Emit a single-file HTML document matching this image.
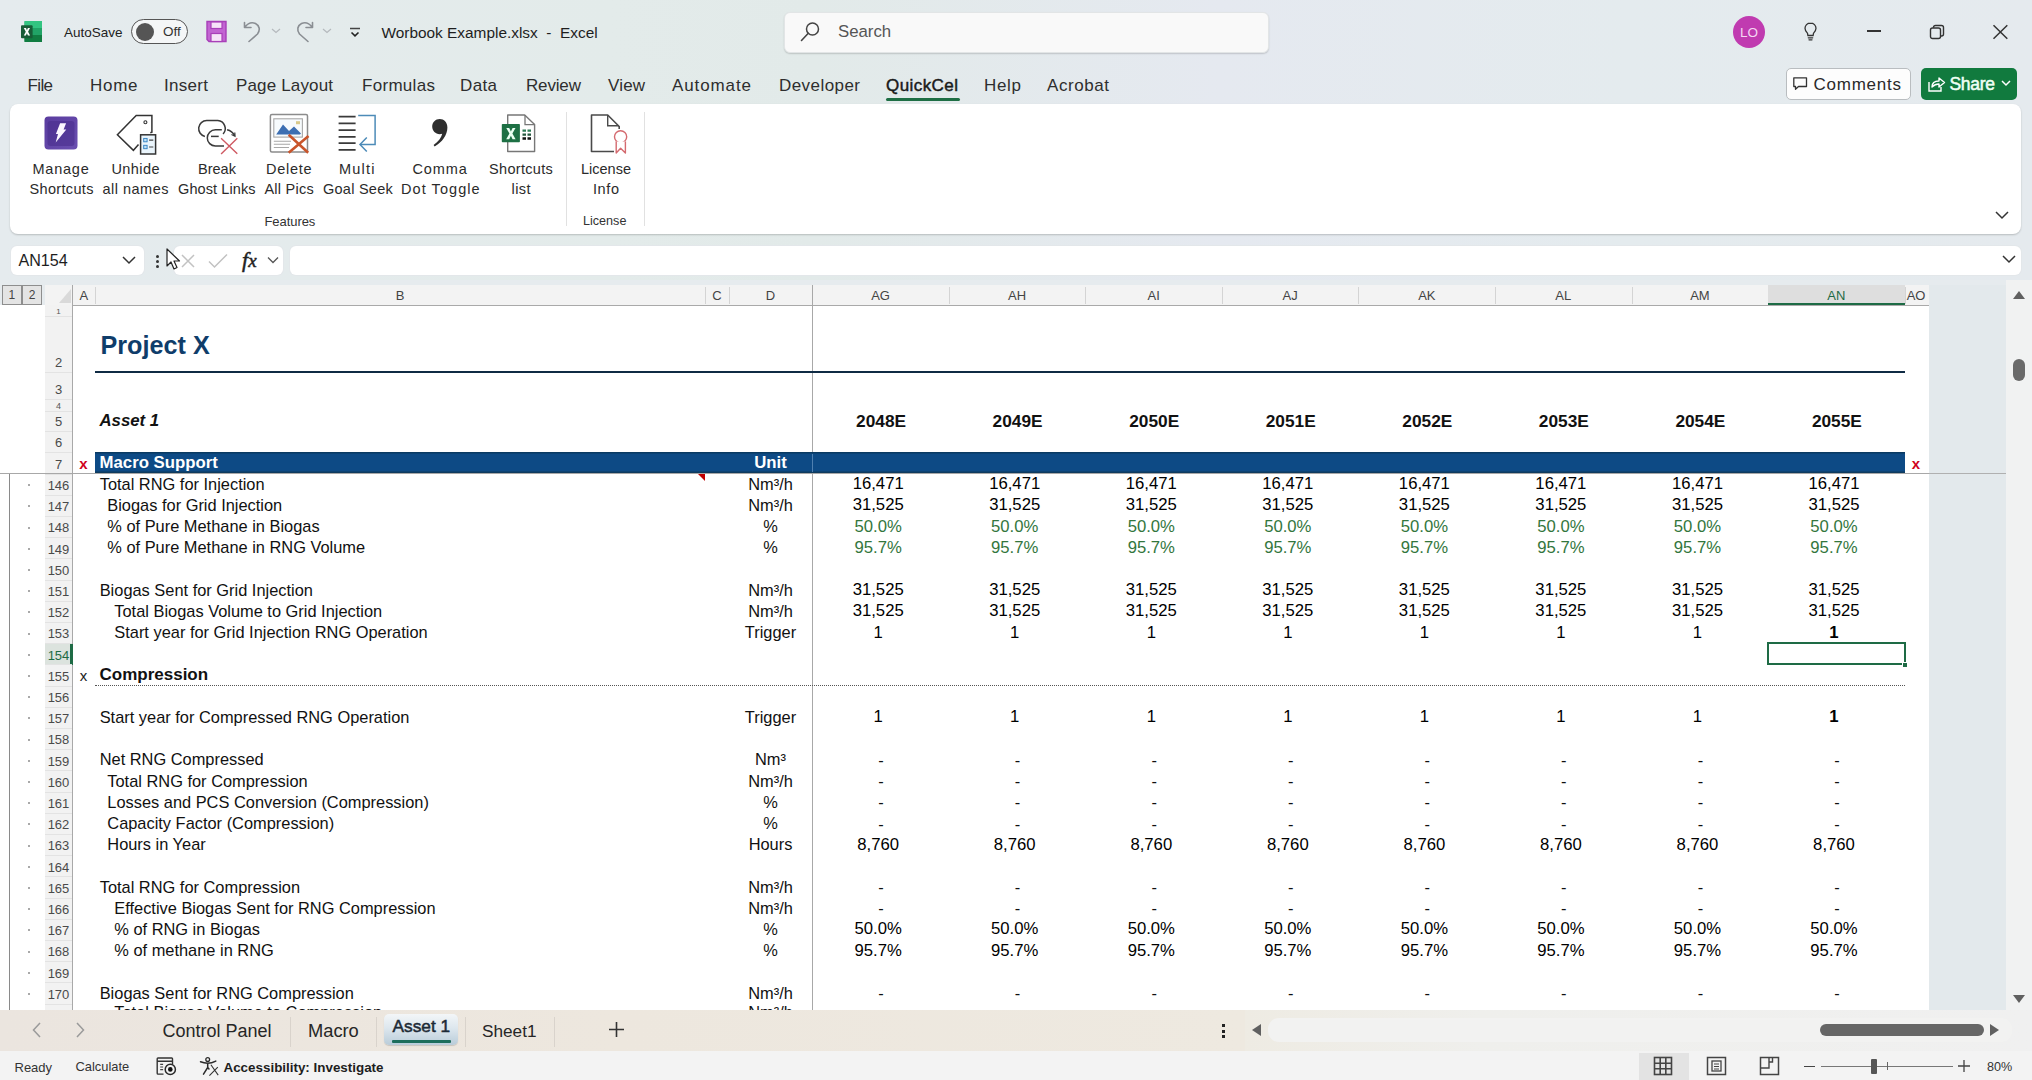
<!DOCTYPE html>
<html><head><meta charset="utf-8"><style>
html,body{margin:0;padding:0;}
body{width:2032px;height:1080px;overflow:hidden;position:relative;background:#e6ebee;font-family:"Liberation Sans", sans-serif;}
.t{position:absolute;white-space:nowrap;font-family:"Liberation Sans", sans-serif;}
.r{position:absolute;}
svg.r{overflow:visible;}
</style></head><body>
<div class="r" style="left:0;top:0;width:2032px;height:280px;background:linear-gradient(90deg,#e5ebee 0%,#e3ebea 30%,#e2eae9 40%,#e5e9f0 60%,#e4ebee 80%,#e5eaee 100%);"></div>
<svg class="r" style="left:20px;top:20px" width="24" height="24" viewBox="0 0 24 24">
<rect x="4.5" y="1" width="17.5" height="21" rx="1" fill="#21a366"/>
<rect x="4.5" y="1" width="17.5" height="7" fill="#33c481"/>
<rect x="4.5" y="15" width="17.5" height="7" fill="#107c41"/>
<rect x="1" y="5.3" width="11.6" height="13" rx="1" fill="#185c37"/>
<path d="M3.8 8 L6 8 L6.9 10.3 L7.9 8 L10 8 L8.1 11.7 L10.1 15.6 L7.9 15.6 L6.9 13.2 L5.9 15.6 L3.8 15.6 L5.8 11.7 Z" fill="#fff"/>
</svg><div class="t" style="left:64.0px;top:25.6px;font-size:13.5px;line-height:13.5px;color:#222;font-weight:normal;font-style:normal;">AutoSave</div><div class="r" style="left:131px;top:18.5px;width:57px;height:25px;border:1.5px solid #555;border-radius:13px;box-sizing:border-box;background:#f4f6f7;"></div><div class="r" style="left:136px;top:22.5px;width:18px;height:18px;background:#555;border-radius:50%;"></div><div class="t" style="left:163.0px;top:25.4px;font-size:13.5px;line-height:13.5px;color:#333;font-weight:normal;font-style:normal;">Off</div><svg class="r" style="left:205px;top:20px" width="23" height="23" viewBox="0 0 23 23">
<path d="M2 1.5 H21 V21.5 H4 L2 19.5 Z" fill="#c264d2" stroke="#a83fb8" stroke-width="1.4"/>
<rect x="6" y="2" width="11" height="6.5" fill="#f6e3f8" stroke="#a83fb8" stroke-width="1.2"/>
<rect x="6" y="13.5" width="11" height="8" fill="#f6e3f8" stroke="#a83fb8" stroke-width="1.2"/>
</svg><svg class="r" style="left:242px;top:19px" width="22" height="25" viewBox="0 0 22 25"><path d="M2.5 3.5 V8.5 H9 M2.8 8.3 C6 4 10 3 13.5 4.5 C17.5 6.5 18.5 11 15.5 15 L7 22.5" fill="none" stroke="#8a8e93" stroke-width="1.6" stroke-linecap="round" stroke-linejoin="round"/></svg><svg class="r" style="left:270px;top:27px" width="12" height="8" viewBox="0 0 12 8"><path d="M2 2 L6 5.5 L10 2" fill="none" stroke="#b5b9bd" stroke-width="1.2"/></svg><svg class="r" style="left:293px;top:19px" width="22" height="25" viewBox="0 0 22 25"><path d="M19.5 3.5 V8.5 H13 M19.2 8.3 C16 4 12 3 8.5 4.5 C4.5 6.5 3.5 11 6.5 15 L15 22.5" fill="none" stroke="#8a8e93" stroke-width="1.6" stroke-linecap="round" stroke-linejoin="round"/></svg><svg class="r" style="left:321px;top:27px" width="12" height="8" viewBox="0 0 12 8"><path d="M2 2 L6 5.5 L10 2" fill="none" stroke="#b5b9bd" stroke-width="1.2"/></svg><svg class="r" style="left:347px;top:25px" width="16" height="14" viewBox="0 0 16 14"><path d="M3 3.5 H13" stroke="#444" stroke-width="1.5"/><path d="M4.5 7.5 L8 10.8 L11.5 7.5" fill="none" stroke="#222" stroke-width="1.6"/></svg><div class="t" style="left:381.5px;top:24.7px;font-size:15.4px;line-height:15.4px;color:#1e1e1e;font-weight:normal;font-style:normal;">Worbook Example.xlsx&nbsp;&nbsp;-&nbsp;&nbsp;Excel</div><div class="r" style="left:784px;top:11.5px;width:485px;height:41px;background:#f9f9f9;border:1px solid #e2e5e6;border-radius:6px;box-sizing:border-box;box-shadow:0 1px 1.5px rgba(0,0,0,0.16);"></div><svg class="r" style="left:798px;top:20px" width="24" height="24" viewBox="0 0 24 24"><circle cx="14.5" cy="9" r="6" fill="none" stroke="#444" stroke-width="1.5"/><path d="M10.3 13.3 L3.5 20.5" stroke="#444" stroke-width="1.6" stroke-linecap="round"/></svg><div class="t" style="left:838.0px;top:23.8px;font-size:16.8px;line-height:16.8px;color:#555;font-weight:normal;font-style:normal;">Search</div><div class="r" style="left:1733px;top:16px;width:32px;height:32px;background:#c03bb0;border-radius:50%;"></div><div class="t" style="left:1729.0px;width:40px;text-align:center;top:26.1px;font-size:13.5px;line-height:13.5px;color:#f5d7f2;font-weight:normal;font-style:normal;">LO</div><svg class="r" style="left:1802px;top:21px" width="18" height="21" viewBox="0 0 18 21"><path d="M8.5 2 C5.2 2 3 4.5 3 7.3 C3 9.5 4.3 10.8 5.5 12.2 L5.9 14.5 H11.1 L11.5 12.2 C12.7 10.8 14 9.5 14 7.3 C14 4.5 11.8 2 8.5 2 Z" fill="none" stroke="#333" stroke-width="1.3"/><path d="M6.3 16.8 H10.7 M7 18.8 H10" stroke="#333" stroke-width="1.3" stroke-linecap="round"/></svg><div class="r" style="left:1866.5px;top:30px;width:14px;height:2px;background:#333;"></div><svg class="r" style="left:1929px;top:24px" width="17" height="16" viewBox="0 0 17 16"><rect x="1.5" y="4" width="10" height="10.5" rx="2" fill="none" stroke="#333" stroke-width="1.4"/><path d="M4.5 3.8 V3.5 C4.5 2.4 5.3 1.5 6.5 1.5 H12.5 C13.6 1.5 14.5 2.4 14.5 3.5 V10 C14.5 11.1 13.6 12 12.5 12 H11.8" fill="none" stroke="#333" stroke-width="1.4"/></svg><svg class="r" style="left:1992px;top:24px" width="17" height="16" viewBox="0 0 17 16"><path d="M1.5 1.2 L15.3 14.8 M15.3 1.2 L1.5 14.8" stroke="#333" stroke-width="1.5"/></svg><div class="t" style="left:27.5px;top:76.6px;font-size:17px;line-height:17px;color:#2e2e2e;font-weight:normal;font-style:normal;letter-spacing:-0.63px;">File</div><div class="t" style="left:90.0px;top:76.6px;font-size:17px;line-height:17px;color:#2e2e2e;font-weight:normal;font-style:normal;letter-spacing:0.70px;">Home</div><div class="t" style="left:164.0px;top:76.6px;font-size:17px;line-height:17px;color:#2e2e2e;font-weight:normal;font-style:normal;letter-spacing:0.30px;">Insert</div><div class="t" style="left:236.0px;top:76.6px;font-size:17px;line-height:17px;color:#2e2e2e;font-weight:normal;font-style:normal;letter-spacing:0.15px;">Page Layout</div><div class="t" style="left:362.0px;top:76.6px;font-size:17px;line-height:17px;color:#2e2e2e;font-weight:normal;font-style:normal;letter-spacing:0.30px;">Formulas</div><div class="t" style="left:460.0px;top:76.6px;font-size:17px;line-height:17px;color:#2e2e2e;font-weight:normal;font-style:normal;letter-spacing:0.37px;">Data</div><div class="t" style="left:526.0px;top:76.6px;font-size:17px;line-height:17px;color:#2e2e2e;font-weight:normal;font-style:normal;letter-spacing:-0.16px;">Review</div><div class="t" style="left:608.0px;top:76.6px;font-size:17px;line-height:17px;color:#2e2e2e;font-weight:normal;font-style:normal;letter-spacing:0.17px;">View</div><div class="t" style="left:672.0px;top:76.6px;font-size:17px;line-height:17px;color:#2e2e2e;font-weight:normal;font-style:normal;letter-spacing:0.89px;">Automate</div><div class="t" style="left:779.0px;top:76.6px;font-size:17px;line-height:17px;color:#2e2e2e;font-weight:normal;font-style:normal;letter-spacing:0.44px;">Developer</div><div class="t" style="left:886.0px;top:76.6px;font-size:17px;line-height:17px;color:#1a1a1a;font-weight:normal;font-style:normal;letter-spacing:0.43px;-webkit-text-stroke:0.45px #1a1a1a;">QuickCel</div><div class="t" style="left:984.0px;top:76.6px;font-size:17px;line-height:17px;color:#2e2e2e;font-weight:normal;font-style:normal;letter-spacing:0.67px;">Help</div><div class="t" style="left:1047.0px;top:76.6px;font-size:17px;line-height:17px;color:#2e2e2e;font-weight:normal;font-style:normal;letter-spacing:0.57px;">Acrobat</div><div class="r" style="left:886px;top:97.5px;width:74px;height:3px;background:#1e6e44;border-radius:2px;"></div><div class="r" style="left:1786px;top:68px;width:125px;height:32px;background:#fdfdfd;border:1px solid #b9bdc0;border-radius:5px;box-sizing:border-box;"></div><svg class="r" style="left:1792px;top:76px" width="18" height="18" viewBox="0 0 18 18"><path d="M1.8 1.8 H14.5 V10.5 H6.5 L3.5 13.3 V10.5 H1.8 Z" fill="none" stroke="#333" stroke-width="1.3" stroke-linejoin="round"/></svg><div class="t" style="left:1813.5px;top:75.6px;font-size:17px;line-height:17px;color:#2a2a2a;font-weight:normal;font-style:normal;letter-spacing:0.75px;">Comments</div><div class="r" style="left:1921px;top:68px;width:96px;height:32px;background:#117a3e;border-radius:5px;"></div><svg class="r" style="left:1926px;top:74px" width="22" height="20" viewBox="0 0 22 20"><path d="M3 8 V17 H15 V13" fill="none" stroke="#fff" stroke-width="1.4"/><path d="M6 13 C6 9 9 7 13 7 V4 L18.5 8.5 L13 13 V10 C10 10 8 11 6 13 Z" fill="none" stroke="#fff" stroke-width="1.4" stroke-linejoin="round"/></svg><div class="t" style="left:1949.5px;top:75.7px;font-size:17.5px;line-height:17.5px;color:#effff4;font-weight:normal;font-style:normal;-webkit-text-stroke:0.5px #effff4;letter-spacing:-0.3px;">Share</div><svg class="r" style="left:2000px;top:78px" width="12" height="10" viewBox="0 0 12 10"><path d="M2 3 L6 7 L10 3" fill="none" stroke="#fff" stroke-width="1.5"/></svg><div class="r" style="left:10px;top:104px;width:2011px;height:130px;background:#fff;border-radius:8px;box-shadow:0 1px 2px rgba(0,0,0,0.2);"></div><div class="t" style="left:32.5px;top:161.5px;font-size:14.5px;line-height:14.5px;color:#2b2b2b;font-weight:normal;font-style:normal;letter-spacing:0.76px;">Manage</div><div class="t" style="left:29.6px;top:182.1px;font-size:14.5px;line-height:14.5px;color:#2b2b2b;font-weight:normal;font-style:normal;letter-spacing:0.32px;">Shortcuts</div><div class="t" style="left:111.5px;top:161.5px;font-size:14.5px;line-height:14.5px;color:#2b2b2b;font-weight:normal;font-style:normal;letter-spacing:0.40px;">Unhide</div><div class="t" style="left:102.4px;top:182.1px;font-size:14.5px;line-height:14.5px;color:#2b2b2b;font-weight:normal;font-style:normal;letter-spacing:0.50px;">all names</div><div class="t" style="left:198.0px;top:161.5px;font-size:14.5px;line-height:14.5px;color:#2b2b2b;font-weight:normal;font-style:normal;letter-spacing:0.02px;">Break</div><div class="t" style="left:178.0px;top:182.1px;font-size:14.5px;line-height:14.5px;color:#2b2b2b;font-weight:normal;font-style:normal;letter-spacing:0.10px;">Ghost Links</div><div class="t" style="left:266.0px;top:161.5px;font-size:14.5px;line-height:14.5px;color:#2b2b2b;font-weight:normal;font-style:normal;letter-spacing:0.73px;">Delete</div><div class="t" style="left:264.4px;top:182.1px;font-size:14.5px;line-height:14.5px;color:#2b2b2b;font-weight:normal;font-style:normal;letter-spacing:0.27px;">All Pics</div><div class="t" style="left:339.0px;top:161.5px;font-size:14.5px;line-height:14.5px;color:#2b2b2b;font-weight:normal;font-style:normal;letter-spacing:1.24px;">Multi</div><div class="t" style="left:323.0px;top:182.1px;font-size:14.5px;line-height:14.5px;color:#2b2b2b;font-weight:normal;font-style:normal;letter-spacing:0.25px;">Goal Seek</div><div class="t" style="left:412.5px;top:161.5px;font-size:14.5px;line-height:14.5px;color:#2b2b2b;font-weight:normal;font-style:normal;letter-spacing:0.86px;">Comma</div><div class="t" style="left:401.0px;top:182.1px;font-size:14.5px;line-height:14.5px;color:#2b2b2b;font-weight:normal;font-style:normal;letter-spacing:1.06px;">Dot Toggle</div><div class="t" style="left:489.0px;top:161.5px;font-size:14.5px;line-height:14.5px;color:#2b2b2b;font-weight:normal;font-style:normal;letter-spacing:0.32px;">Shortcuts</div><div class="t" style="left:511.5px;top:182.1px;font-size:14.5px;line-height:14.5px;color:#2b2b2b;font-weight:normal;font-style:normal;letter-spacing:0.43px;">list</div><div class="t" style="left:581.0px;top:161.5px;font-size:14.5px;line-height:14.5px;color:#2b2b2b;font-weight:normal;font-style:normal;letter-spacing:-0.00px;">License</div><div class="t" style="left:593.0px;top:182.1px;font-size:14.5px;line-height:14.5px;color:#2b2b2b;font-weight:normal;font-style:normal;letter-spacing:0.59px;">Info</div><div class="t" style="left:264.4px;top:215.0px;font-size:13px;line-height:13px;color:#333;font-weight:normal;font-style:normal;letter-spacing:-0.05px;">Features</div><div class="t" style="left:583.0px;top:215.3px;font-size:12.6px;line-height:12.6px;color:#333;font-weight:normal;font-style:normal;">License</div><div class="r" style="left:566px;top:112px;width:1px;height:114px;background:#e1e1e1;"></div><div class="r" style="left:644px;top:112px;width:1px;height:114px;background:#e1e1e1;"></div><svg class="r" style="left:1994px;top:208px" width="16" height="14" viewBox="0 0 16 14"><path d="M2 4 L8 10 L14 4" fill="none" stroke="#333" stroke-width="1.5"/></svg><svg class="r" style="left:44px;top:116px" width="34" height="34" viewBox="0 0 34 34">
<defs><linearGradient id="gp" x1="0" y1="0" x2="1" y2="1"><stop offset="0" stop-color="#5a3c9f"/><stop offset="1" stop-color="#6a4fb0"/></linearGradient></defs>
<rect x="0.5" y="0.5" width="33" height="33" rx="4" fill="url(#gp)"/>
<rect x="3.5" y="5" width="27" height="25" rx="3" fill="#472b8a" opacity="0.55"/><path d="M16.1 7.2 H22.1 L19.6 13.6 H22.3 L11.7 26.4 L14 17.9 H11.9 Z" fill="#fbf6ff"/>
</svg><svg class="r" style="left:115px;top:114px" width="44" height="42" viewBox="0 0 44 42">
<path d="M35.3 18.7 L36.9 18.2 V1.6 H21.2 L2.4 20.8 L18.4 36.3 L23.5 30.5" fill="none" stroke="#333" stroke-width="1.5" stroke-linejoin="miter"/>
<circle cx="30.4" cy="8.3" r="1.5" fill="none" stroke="#333" stroke-width="1.1"/>
<rect x="25.6" y="20.8" width="15" height="19.2" fill="#eaf5fc" stroke="#333" stroke-width="1.5"/>
<rect x="28.7" y="24.4" width="3.4" height="3.4" fill="#bfe0f5" stroke="#2f7fc1" stroke-width="0.9"/>
<rect x="28.7" y="31.3" width="3.4" height="3.4" fill="#bfe0f5" stroke="#2f7fc1" stroke-width="0.9"/>
<path d="M34.1 26.1 H38.3 M34.1 33 H38.3" stroke="#444" stroke-width="1.1"/>
</svg><svg class="r" style="left:197px;top:118px" width="44" height="40" viewBox="0 0 44 40">
<path d="M7.9 18.4 A8 8 0 0 1 9.7 2.6 H20.8 A8 8 0 0 1 26.1 16" fill="none" stroke="#3a3a3a" stroke-width="1.5"/>
<path d="M24.8 11.8 H18.4 A8.1 8.1 0 0 0 18.4 28 H27" fill="none" stroke="#3a3a3a" stroke-width="1.5"/>
<path d="M14 18.4 H21.7" stroke="#3a3a3a" stroke-width="1.5"/>
<path d="M30.1 11.8 C33 12.5 36 14.5 37.7 17.6" fill="none" stroke="#3a3a3a" stroke-width="1.5"/>
<path d="M34.5 16.5 L38 18.2 L37.8 14.5" fill="none" stroke="#3a3a3a" stroke-width="1.2"/>
<path d="M24.1 20.2 L40.3 35.8 M40.3 20.2 L24.1 36" stroke="#cf5a63" stroke-width="1.4"/>
</svg><svg class="r" style="left:269px;top:113px" width="42" height="42" viewBox="0 0 42 42">
<rect x="1.4" y="1.5" width="37.1" height="37.5" rx="1.5" fill="#fff" stroke="#8c8c8c" stroke-width="1.5"/>
<rect x="4.8" y="5.8" width="28.6" height="18.3" fill="#f7fbfd" stroke="#a8a8a8" stroke-width="1.1"/>
<path d="M7.2 21.5 L14 11.4 L20 18.1 L25 13.5 L32 20.5 L31 21.5 Z" fill="#3d6fb2"/>
<rect x="27" y="8.2" width="4" height="3" fill="#d8c98a"/>
<path d="M4.8 28.2 H22 M4.8 31.3 H21 M4.8 34.5 H20" stroke="#a8a8a8" stroke-width="1.1"/>
<path d="M19.7 21.7 L39.2 39.8 M39.5 22.9 L19.7 39.8" stroke="#c9552b" stroke-width="2.6"/>
</svg><svg class="r" style="left:337px;top:113px" width="42" height="40" viewBox="0 0 42 40">
<path d="M1.6 3.6 H18.6 M1.6 10.4 H18.6 M1.6 17.1 H18.6 M1.6 23.8 H18.6 M1.6 30.2 H18.6 M1.6 36.9 H18.6" stroke="#3a3a3a" stroke-width="1.8"/>
<path d="M21.2 2.4 H38.1 V31.5 H23" fill="none" stroke="#4d8bb8" stroke-width="1.5"/>
<path d="M29.8 24.4 L23 31.5 L29.8 38.5" fill="none" stroke="#4d8bb8" stroke-width="1.5"/>
</svg><svg class="r" style="left:430px;top:118px" width="22" height="30" viewBox="0 0 22 30">
<path d="M9.7 1.1 C14 1.1 17.4 4.5 17.4 9.5 C17.4 17 12 24.5 4.6 28.4 L3.6 27 C8.5 23.5 11.5 19.5 12.2 15.8 C11.5 16.1 10.6 16.2 9.7 16.2 C5.5 16.2 2.2 12.8 2.2 8.6 C2.2 4.4 5.5 1.1 9.7 1.1 Z" fill="#2e2e2e"/>
</svg><svg class="r" style="left:500px;top:113px" width="38" height="42" viewBox="0 0 38 42">
<path d="M7.7 2 H24.7 L34.6 11.6 V38.5 H7.7 Z" fill="#fff" stroke="#777" stroke-width="1.4" stroke-linejoin="round"/>
<path d="M25 2 V11.6 H34.6" fill="none" stroke="#777" stroke-width="1.3"/>
<rect x="1.8" y="10.9" width="18.1" height="18.4" rx="0.8" fill="#1d7044"/>
<path d="M6.3 15 H9.2 L10.9 18.5 L12.6 15 H15.5 L12.4 20.6 L15.6 26.2 H12.6 L10.9 22.7 L9.2 26.2 H6.2 L9.4 20.6 Z" fill="#e9fff2"/>
<path d="M22.5 16.4 H26 V18.8 H22.5 Z M27.5 16.4 H31 V18.8 H27.5 Z" fill="#2d7a55"/>
<path d="M22.5 20.4 H26 V22.8 H22.5 Z M27.5 20.4 H31 V22.8 H27.5 Z" fill="#24573e"/>
<path d="M22.5 24.3 H26 V26.7 H22.5 Z M27.5 24.3 H31 V26.7 H27.5 Z" fill="#111"/>
</svg><svg class="r" style="left:589px;top:113px" width="42" height="44" viewBox="0 0 42 44">
<path d="M25 38.5 H2.5 V2 H18.7 L30.2 13.5 V16" fill="none" stroke="#4a4a4a" stroke-width="1.6" stroke-linejoin="round"/>
<path d="M18.7 2 V12.7 H30" fill="none" stroke="#4a4a4a" stroke-width="1.4"/>
<circle cx="31.6" cy="23.8" r="6.1" fill="#fff" stroke="#d46a6f" stroke-width="1.4"/>
<path d="M27.2 28.4 V40 L31.6 35.2 L36.4 40 V28.4" fill="#fff" stroke="#d46a6f" stroke-width="1.4" stroke-linejoin="round"/>
</svg><div class="r" style="left:11px;top:246px;width:133px;height:29px;background:#fff;border-radius:6px;box-shadow:0 0 0 1px #e3e7ea;"></div><div class="t" style="left:18.5px;top:252.4px;font-size:16.1px;line-height:16.1px;color:#1e1e1e;font-weight:normal;font-style:normal;">AN154</div><svg class="r" style="left:120px;top:253px" width="18" height="14" viewBox="0 0 18 14"><path d="M3 4 L9 10 L15 4" fill="none" stroke="#333" stroke-width="1.5"/></svg><div class="r" style="left:156px;top:254.5px;width:3px;height:3px;background:#333;border-radius:50%;"></div><div class="r" style="left:156px;top:259.5px;width:3px;height:3px;background:#333;border-radius:50%;"></div><div class="r" style="left:156px;top:264.5px;width:3px;height:3px;background:#333;border-radius:50%;"></div><div class="r" style="left:174px;top:246px;width:109px;height:29px;background:#fff;border-radius:6px;box-shadow:0 0 0 1px #e3e7ea;"></div><svg class="r" style="left:178px;top:251px" width="20" height="20" viewBox="0 0 20 20"><path d="M4 4 L16 16 M16 4 L4 16" stroke="#c2c2c2" stroke-width="1.5"/></svg><svg class="r" style="left:206px;top:251px" width="24" height="20" viewBox="0 0 24 20"><path d="M3 10.5 L8.5 16 L21 3.5" fill="none" stroke="#c2c2c2" stroke-width="1.5"/></svg><div class="t" style="left:242.0px;top:249.4px;font-size:22px;line-height:22px;color:#222;font-weight:normal;font-style:italic;font-family:'Liberation Serif',serif;-webkit-text-stroke:0.5px #222;"><i>f</i><i style="font-size:19px">x</i></div><svg class="r" style="left:266px;top:254px" width="14" height="12" viewBox="0 0 14 12"><path d="M2 3.5 L7 8.5 L12 3.5" fill="none" stroke="#555" stroke-width="1.3"/></svg><svg class="r" style="left:165px;top:247px" width="18" height="26" viewBox="0 0 18 26"><path d="M2 2 L2 19 L6 15 L9 22 L12 20.5 L9 14 L14.5 14 Z" fill="#fff" stroke="#222" stroke-width="1.2" stroke-linejoin="round"/></svg><div class="r" style="left:290px;top:246px;width:1731px;height:29px;background:#fff;border-radius:6px;box-shadow:0 0 0 1px #e3e7ea;"></div><svg class="r" style="left:2000px;top:252px" width="18" height="14" viewBox="0 0 18 14"><path d="M3 4 L9 10 L15 4" fill="none" stroke="#333" stroke-width="1.5"/></svg><div class="r" style="left:0px;top:305px;width:1929px;height:706px;background:#fff;"></div><div class="r" style="left:45px;top:285px;width:1884px;height:20px;background:#f3f3f3;"></div><div class="r" style="left:45px;top:304.5px;width:1884px;height:1px;background:#a9a9a9;"></div><div class="r" style="left:2px;top:284.5px;width:19.5px;height:20px;background:#e4e4e4;border:1px solid #8e8e8e;box-sizing:border-box;"></div><div class="r" style="left:22px;top:284.5px;width:20px;height:20px;background:#e4e4e4;border:1px solid #8e8e8e;box-sizing:border-box;"></div><div class="t" style="left:1.8px;width:20px;text-align:center;top:289.3px;font-size:12px;line-height:12px;color:#444;font-weight:normal;font-style:normal;">1</div><div class="t" style="left:22.0px;width:20px;text-align:center;top:289.3px;font-size:12px;line-height:12px;color:#444;font-weight:normal;font-style:normal;">2</div><svg class="r" style="left:58px;top:288px" width="14" height="16" viewBox="0 0 14 16"><path d="M13 1 V15 H1 Z" fill="#d9d9d9"/></svg><div class="r" style="left:45px;top:305px;width:27.5px;height:706px;background:#f2f2f2;"></div><div class="r" style="left:72px;top:285px;width:1px;height:726px;background:#a9a9a9;"></div><div class="r" style="left:95px;top:287px;width:1px;height:17px;background:#d4d4d4;"></div><div class="t" style="left:43.9px;width:80px;text-align:center;top:288.6px;font-size:13px;line-height:13px;color:#444;font-weight:normal;font-style:normal;">A</div><div class="r" style="left:705px;top:287px;width:1px;height:17px;background:#d4d4d4;"></div><div class="t" style="left:360.2px;width:80px;text-align:center;top:288.6px;font-size:13px;line-height:13px;color:#444;font-weight:normal;font-style:normal;">B</div><div class="r" style="left:729px;top:287px;width:1px;height:17px;background:#d4d4d4;"></div><div class="t" style="left:676.9px;width:80px;text-align:center;top:288.6px;font-size:13px;line-height:13px;color:#444;font-weight:normal;font-style:normal;">C</div><div class="r" style="left:812px;top:287px;width:1px;height:17px;background:#d4d4d4;"></div><div class="t" style="left:730.5px;width:80px;text-align:center;top:288.6px;font-size:13px;line-height:13px;color:#444;font-weight:normal;font-style:normal;">D</div><div class="r" style="left:949px;top:287px;width:1px;height:17px;background:#d4d4d4;"></div><div class="t" style="left:840.6px;width:80px;text-align:center;top:288.6px;font-size:13px;line-height:13px;color:#444;font-weight:normal;font-style:normal;">AG</div><div class="r" style="left:1085px;top:287px;width:1px;height:17px;background:#d4d4d4;"></div><div class="t" style="left:977.1px;width:80px;text-align:center;top:288.6px;font-size:13px;line-height:13px;color:#444;font-weight:normal;font-style:normal;">AH</div><div class="r" style="left:1222px;top:287px;width:1px;height:17px;background:#d4d4d4;"></div><div class="t" style="left:1113.7px;width:80px;text-align:center;top:288.6px;font-size:13px;line-height:13px;color:#444;font-weight:normal;font-style:normal;">AI</div><div class="r" style="left:1358px;top:287px;width:1px;height:17px;background:#d4d4d4;"></div><div class="t" style="left:1250.2px;width:80px;text-align:center;top:288.6px;font-size:13px;line-height:13px;color:#444;font-weight:normal;font-style:normal;">AJ</div><div class="r" style="left:1495px;top:287px;width:1px;height:17px;background:#d4d4d4;"></div><div class="t" style="left:1386.8px;width:80px;text-align:center;top:288.6px;font-size:13px;line-height:13px;color:#444;font-weight:normal;font-style:normal;">AK</div><div class="r" style="left:1632px;top:287px;width:1px;height:17px;background:#d4d4d4;"></div><div class="t" style="left:1523.3px;width:80px;text-align:center;top:288.6px;font-size:13px;line-height:13px;color:#444;font-weight:normal;font-style:normal;">AL</div><div class="r" style="left:1768px;top:287px;width:1px;height:17px;background:#d4d4d4;"></div><div class="t" style="left:1659.9px;width:80px;text-align:center;top:288.6px;font-size:13px;line-height:13px;color:#444;font-weight:normal;font-style:normal;">AM</div><div class="r" style="left:1768px;top:285px;width:137px;height:20px;background:#dedede;"></div><div class="r" style="left:1768px;top:303px;width:137px;height:2px;background:#1e6b45;"></div><div class="r" style="left:1905px;top:287px;width:1px;height:17px;background:#d4d4d4;"></div><div class="t" style="left:1796.4px;width:80px;text-align:center;top:288.6px;font-size:13px;line-height:13px;color:#1e6b45;font-weight:normal;font-style:normal;">AN</div><div class="r" style="left:1929px;top:287px;width:1px;height:17px;background:#d4d4d4;"></div><div class="t" style="left:1906.7px;top:288.6px;font-size:13px;line-height:13px;color:#444;font-weight:normal;font-style:normal;">AO</div><div class="r" style="left:45px;top:315.5px;width:27px;height:1px;background:#e3e3e3;"></div><div class="t" style="left:43.5px;width:30px;text-align:center;top:307.7px;font-size:8px;line-height:8px;color:#555;font-weight:normal;font-style:normal;">1</div><div class="r" style="left:45px;top:372.0px;width:27px;height:1px;background:#e3e3e3;"></div><div class="t" style="left:43.5px;width:30px;text-align:center;top:356.3px;font-size:13px;line-height:13px;color:#4a4a4a;font-weight:normal;font-style:normal;">2</div><div class="r" style="left:45px;top:399.0px;width:27px;height:1px;background:#e3e3e3;"></div><div class="t" style="left:43.5px;width:30px;text-align:center;top:383.3px;font-size:13px;line-height:13px;color:#4a4a4a;font-weight:normal;font-style:normal;">3</div><div class="r" style="left:45px;top:410.5px;width:27px;height:1px;background:#e3e3e3;"></div><div class="t" style="left:43.5px;width:30px;text-align:center;top:401.9px;font-size:9px;line-height:9px;color:#555;font-weight:normal;font-style:normal;">4</div><div class="r" style="left:45px;top:431.0px;width:27px;height:1px;background:#e3e3e3;"></div><div class="t" style="left:43.5px;width:30px;text-align:center;top:415.3px;font-size:13px;line-height:13px;color:#4a4a4a;font-weight:normal;font-style:normal;">5</div><div class="r" style="left:45px;top:452.0px;width:27px;height:1px;background:#e3e3e3;"></div><div class="t" style="left:43.5px;width:30px;text-align:center;top:436.3px;font-size:13px;line-height:13px;color:#4a4a4a;font-weight:normal;font-style:normal;">6</div><div class="r" style="left:45px;top:473.5px;width:27px;height:1px;background:#e3e3e3;"></div><div class="t" style="left:43.5px;width:30px;text-align:center;top:457.8px;font-size:13px;line-height:13px;color:#4a4a4a;font-weight:normal;font-style:normal;">7</div><div class="r" style="left:45px;top:494.7px;width:27px;height:1px;background:#e3e3e3;"></div><div class="t" style="left:43.5px;width:30px;text-align:center;top:479.0px;font-size:13px;line-height:13px;color:#4a4a4a;font-weight:normal;font-style:normal;">146</div><div class="r" style="left:28px;top:484.1px;width:2px;height:2px;background:#8c8c8c;border-radius:1px;"></div><div class="r" style="left:45px;top:515.9px;width:27px;height:1px;background:#e3e3e3;"></div><div class="t" style="left:43.5px;width:30px;text-align:center;top:500.2px;font-size:13px;line-height:13px;color:#4a4a4a;font-weight:normal;font-style:normal;">147</div><div class="r" style="left:28px;top:505.29999999999995px;width:2px;height:2px;background:#8c8c8c;border-radius:1px;"></div><div class="r" style="left:45px;top:537.1px;width:27px;height:1px;background:#e3e3e3;"></div><div class="t" style="left:43.5px;width:30px;text-align:center;top:521.4px;font-size:13px;line-height:13px;color:#4a4a4a;font-weight:normal;font-style:normal;">148</div><div class="r" style="left:28px;top:526.5px;width:2px;height:2px;background:#8c8c8c;border-radius:1px;"></div><div class="r" style="left:45px;top:558.3px;width:27px;height:1px;background:#e3e3e3;"></div><div class="t" style="left:43.5px;width:30px;text-align:center;top:542.6px;font-size:13px;line-height:13px;color:#4a4a4a;font-weight:normal;font-style:normal;">149</div><div class="r" style="left:28px;top:547.7px;width:2px;height:2px;background:#8c8c8c;border-radius:1px;"></div><div class="r" style="left:45px;top:579.5px;width:27px;height:1px;background:#e3e3e3;"></div><div class="t" style="left:43.5px;width:30px;text-align:center;top:563.8px;font-size:13px;line-height:13px;color:#4a4a4a;font-weight:normal;font-style:normal;">150</div><div class="r" style="left:28px;top:568.9px;width:2px;height:2px;background:#8c8c8c;border-radius:1px;"></div><div class="r" style="left:45px;top:600.7px;width:27px;height:1px;background:#e3e3e3;"></div><div class="t" style="left:43.5px;width:30px;text-align:center;top:585.0px;font-size:13px;line-height:13px;color:#4a4a4a;font-weight:normal;font-style:normal;">151</div><div class="r" style="left:28px;top:590.1px;width:2px;height:2px;background:#8c8c8c;border-radius:1px;"></div><div class="r" style="left:45px;top:621.9px;width:27px;height:1px;background:#e3e3e3;"></div><div class="t" style="left:43.5px;width:30px;text-align:center;top:606.2px;font-size:13px;line-height:13px;color:#4a4a4a;font-weight:normal;font-style:normal;">152</div><div class="r" style="left:28px;top:611.3px;width:2px;height:2px;background:#8c8c8c;border-radius:1px;"></div><div class="r" style="left:45px;top:643.1px;width:27px;height:1px;background:#e3e3e3;"></div><div class="t" style="left:43.5px;width:30px;text-align:center;top:627.4px;font-size:13px;line-height:13px;color:#4a4a4a;font-weight:normal;font-style:normal;">153</div><div class="r" style="left:28px;top:632.5px;width:2px;height:2px;background:#8c8c8c;border-radius:1px;"></div><div class="r" style="left:45px;top:643.6px;width:27px;height:21.199999999999932px;background:#dce3de;"></div><div class="r" style="left:70px;top:643.6px;width:2.5px;height:21.199999999999932px;background:#1e6b45;"></div><div class="r" style="left:45px;top:664.3px;width:27px;height:1px;background:#e3e3e3;"></div><div class="t" style="left:43.5px;width:30px;text-align:center;top:648.6px;font-size:13px;line-height:13px;color:#1e6b45;font-weight:normal;font-style:normal;">154</div><div class="r" style="left:28px;top:653.7px;width:2px;height:2px;background:#8c8c8c;border-radius:1px;"></div><div class="r" style="left:45px;top:685.5px;width:27px;height:1px;background:#e3e3e3;"></div><div class="t" style="left:43.5px;width:30px;text-align:center;top:669.8px;font-size:13px;line-height:13px;color:#4a4a4a;font-weight:normal;font-style:normal;">155</div><div class="r" style="left:28px;top:674.9px;width:2px;height:2px;background:#8c8c8c;border-radius:1px;"></div><div class="r" style="left:45px;top:706.7px;width:27px;height:1px;background:#e3e3e3;"></div><div class="t" style="left:43.5px;width:30px;text-align:center;top:691.0px;font-size:13px;line-height:13px;color:#4a4a4a;font-weight:normal;font-style:normal;">156</div><div class="r" style="left:28px;top:696.1px;width:2px;height:2px;background:#8c8c8c;border-radius:1px;"></div><div class="r" style="left:45px;top:727.9px;width:27px;height:1px;background:#e3e3e3;"></div><div class="t" style="left:43.5px;width:30px;text-align:center;top:712.2px;font-size:13px;line-height:13px;color:#4a4a4a;font-weight:normal;font-style:normal;">157</div><div class="r" style="left:28px;top:717.3px;width:2px;height:2px;background:#8c8c8c;border-radius:1px;"></div><div class="r" style="left:45px;top:749.0999999999999px;width:27px;height:1px;background:#e3e3e3;"></div><div class="t" style="left:43.5px;width:30px;text-align:center;top:733.4px;font-size:13px;line-height:13px;color:#4a4a4a;font-weight:normal;font-style:normal;">158</div><div class="r" style="left:28px;top:738.5px;width:2px;height:2px;background:#8c8c8c;border-radius:1px;"></div><div class="r" style="left:45px;top:770.3px;width:27px;height:1px;background:#e3e3e3;"></div><div class="t" style="left:43.5px;width:30px;text-align:center;top:754.6px;font-size:13px;line-height:13px;color:#4a4a4a;font-weight:normal;font-style:normal;">159</div><div class="r" style="left:28px;top:759.6999999999999px;width:2px;height:2px;background:#8c8c8c;border-radius:1px;"></div><div class="r" style="left:45px;top:791.5px;width:27px;height:1px;background:#e3e3e3;"></div><div class="t" style="left:43.5px;width:30px;text-align:center;top:775.8px;font-size:13px;line-height:13px;color:#4a4a4a;font-weight:normal;font-style:normal;">160</div><div class="r" style="left:28px;top:780.9px;width:2px;height:2px;background:#8c8c8c;border-radius:1px;"></div><div class="r" style="left:45px;top:812.7px;width:27px;height:1px;background:#e3e3e3;"></div><div class="t" style="left:43.5px;width:30px;text-align:center;top:797.0px;font-size:13px;line-height:13px;color:#4a4a4a;font-weight:normal;font-style:normal;">161</div><div class="r" style="left:28px;top:802.1px;width:2px;height:2px;background:#8c8c8c;border-radius:1px;"></div><div class="r" style="left:45px;top:833.9px;width:27px;height:1px;background:#e3e3e3;"></div><div class="t" style="left:43.5px;width:30px;text-align:center;top:818.2px;font-size:13px;line-height:13px;color:#4a4a4a;font-weight:normal;font-style:normal;">162</div><div class="r" style="left:28px;top:823.3px;width:2px;height:2px;background:#8c8c8c;border-radius:1px;"></div><div class="r" style="left:45px;top:855.0999999999999px;width:27px;height:1px;background:#e3e3e3;"></div><div class="t" style="left:43.5px;width:30px;text-align:center;top:839.4px;font-size:13px;line-height:13px;color:#4a4a4a;font-weight:normal;font-style:normal;">163</div><div class="r" style="left:28px;top:844.5px;width:2px;height:2px;background:#8c8c8c;border-radius:1px;"></div><div class="r" style="left:45px;top:876.3px;width:27px;height:1px;background:#e3e3e3;"></div><div class="t" style="left:43.5px;width:30px;text-align:center;top:860.6px;font-size:13px;line-height:13px;color:#4a4a4a;font-weight:normal;font-style:normal;">164</div><div class="r" style="left:28px;top:865.6999999999999px;width:2px;height:2px;background:#8c8c8c;border-radius:1px;"></div><div class="r" style="left:45px;top:897.5px;width:27px;height:1px;background:#e3e3e3;"></div><div class="t" style="left:43.5px;width:30px;text-align:center;top:881.8px;font-size:13px;line-height:13px;color:#4a4a4a;font-weight:normal;font-style:normal;">165</div><div class="r" style="left:28px;top:886.9px;width:2px;height:2px;background:#8c8c8c;border-radius:1px;"></div><div class="r" style="left:45px;top:918.7px;width:27px;height:1px;background:#e3e3e3;"></div><div class="t" style="left:43.5px;width:30px;text-align:center;top:903.0px;font-size:13px;line-height:13px;color:#4a4a4a;font-weight:normal;font-style:normal;">166</div><div class="r" style="left:28px;top:908.1px;width:2px;height:2px;background:#8c8c8c;border-radius:1px;"></div><div class="r" style="left:45px;top:939.9px;width:27px;height:1px;background:#e3e3e3;"></div><div class="t" style="left:43.5px;width:30px;text-align:center;top:924.2px;font-size:13px;line-height:13px;color:#4a4a4a;font-weight:normal;font-style:normal;">167</div><div class="r" style="left:28px;top:929.3px;width:2px;height:2px;background:#8c8c8c;border-radius:1px;"></div><div class="r" style="left:45px;top:961.0999999999999px;width:27px;height:1px;background:#e3e3e3;"></div><div class="t" style="left:43.5px;width:30px;text-align:center;top:945.4px;font-size:13px;line-height:13px;color:#4a4a4a;font-weight:normal;font-style:normal;">168</div><div class="r" style="left:28px;top:950.5px;width:2px;height:2px;background:#8c8c8c;border-radius:1px;"></div><div class="r" style="left:45px;top:982.3px;width:27px;height:1px;background:#e3e3e3;"></div><div class="t" style="left:43.5px;width:30px;text-align:center;top:966.6px;font-size:13px;line-height:13px;color:#4a4a4a;font-weight:normal;font-style:normal;">169</div><div class="r" style="left:28px;top:971.6999999999999px;width:2px;height:2px;background:#8c8c8c;border-radius:1px;"></div><div class="r" style="left:45px;top:1003.5px;width:27px;height:1px;background:#e3e3e3;"></div><div class="t" style="left:43.5px;width:30px;text-align:center;top:987.8px;font-size:13px;line-height:13px;color:#4a4a4a;font-weight:normal;font-style:normal;">170</div><div class="r" style="left:28px;top:992.9px;width:2px;height:2px;background:#8c8c8c;border-radius:1px;"></div><div class="r" style="left:45px;top:1024.6999999999998px;width:27px;height:1px;background:#e3e3e3;"></div><div class="t" style="left:43.5px;width:30px;text-align:center;top:1009.0px;font-size:13px;line-height:13px;color:#4a4a4a;font-weight:normal;font-style:normal;">171</div><div class="r" style="left:28px;top:1014.0999999999999px;width:2px;height:2px;background:#8c8c8c;border-radius:1px;"></div><div class="r" style="left:9px;top:474px;width:1.3px;height:537px;background:#8a8a8a;"></div><div class="r" style="left:0px;top:473px;width:2006px;height:1.2px;background:#a8a8a8;"></div><div class="r" style="left:812px;top:285px;width:1.2px;height:726px;background:#a8a8a8;"></div><div class="t" style="left:100.5px;top:332.7px;font-size:25.2px;line-height:25.2px;color:#0f3d6a;font-weight:bold;font-style:normal;">Project X</div><div class="r" style="left:95px;top:370.5px;width:1810px;height:2.2px;background:#0f2b44;"></div><div class="t" style="left:99.5px;top:413.4px;font-size:16.8px;line-height:16.8px;color:#111;font-weight:bold;font-style:italic;">Asset 1</div><div class="t" style="left:821.1px;width:120px;text-align:center;top:412.9px;font-size:17.3px;line-height:17.3px;color:#111;font-weight:bold;font-style:normal;">2048E</div><div class="t" style="left:957.6px;width:120px;text-align:center;top:412.9px;font-size:17.3px;line-height:17.3px;color:#111;font-weight:bold;font-style:normal;">2049E</div><div class="t" style="left:1094.2px;width:120px;text-align:center;top:412.9px;font-size:17.3px;line-height:17.3px;color:#111;font-weight:bold;font-style:normal;">2050E</div><div class="t" style="left:1230.7px;width:120px;text-align:center;top:412.9px;font-size:17.3px;line-height:17.3px;color:#111;font-weight:bold;font-style:normal;">2051E</div><div class="t" style="left:1367.3px;width:120px;text-align:center;top:412.9px;font-size:17.3px;line-height:17.3px;color:#111;font-weight:bold;font-style:normal;">2052E</div><div class="t" style="left:1503.8px;width:120px;text-align:center;top:412.9px;font-size:17.3px;line-height:17.3px;color:#111;font-weight:bold;font-style:normal;">2053E</div><div class="t" style="left:1640.4px;width:120px;text-align:center;top:412.9px;font-size:17.3px;line-height:17.3px;color:#111;font-weight:bold;font-style:normal;">2054E</div><div class="t" style="left:1776.9px;width:120px;text-align:center;top:412.9px;font-size:17.3px;line-height:17.3px;color:#111;font-weight:bold;font-style:normal;">2055E</div><div class="r" style="left:95px;top:452px;width:1810px;height:21.2px;background:#0d4a85;box-shadow:inset 0 1.5px #0a3a62, inset 0 -1.5px #0f3b5e;"></div><div class="t" style="left:99.5px;top:454.8px;font-size:16.8px;line-height:16.8px;color:#fff;font-weight:bold;font-style:normal;">Macro Support</div><div class="r" style="left:812px;top:453.5px;width:1px;height:18px;background:#4f80b0;"></div><div class="t" style="left:730.5px;width:80px;text-align:center;top:454.8px;font-size:16.8px;line-height:16.8px;color:#fff;font-weight:bold;font-style:normal;">Unit</div><div class="t" style="left:73.5px;width:20px;text-align:center;top:456.3px;font-size:15px;line-height:15px;color:#d0021b;font-weight:bold;font-style:normal;">x</div><div class="t" style="left:1906.0px;width:20px;text-align:center;top:456.3px;font-size:15px;line-height:15px;color:#d0021b;font-weight:bold;font-style:normal;">x</div><div class="r" style="left:0;top:474px;width:2032px;height:536px;overflow:hidden"><div class="t" style="left:99.7px;top:1.8px;font-size:16.4px;line-height:16.4px;color:#111;font-weight:normal;font-style:normal;">Total RNG for Injection</div><div class="t" style="left:720.5px;width:100px;text-align:center;top:1.8px;font-size:16.4px;line-height:16.4px;color:#111;font-weight:normal;font-style:normal;">Nm³/h</div><div class="t" style="left:828.2px;width:100px;text-align:center;top:2.2px;font-size:16.7px;line-height:16.7px;color:#000;font-weight:normal;font-style:normal;">16,471</div><div class="t" style="left:964.7px;width:100px;text-align:center;top:2.2px;font-size:16.7px;line-height:16.7px;color:#000;font-weight:normal;font-style:normal;">16,471</div><div class="t" style="left:1101.3px;width:100px;text-align:center;top:2.2px;font-size:16.7px;line-height:16.7px;color:#000;font-weight:normal;font-style:normal;">16,471</div><div class="t" style="left:1237.8px;width:100px;text-align:center;top:2.2px;font-size:16.7px;line-height:16.7px;color:#000;font-weight:normal;font-style:normal;">16,471</div><div class="t" style="left:1374.4px;width:100px;text-align:center;top:2.2px;font-size:16.7px;line-height:16.7px;color:#000;font-weight:normal;font-style:normal;">16,471</div><div class="t" style="left:1510.9px;width:100px;text-align:center;top:2.2px;font-size:16.7px;line-height:16.7px;color:#000;font-weight:normal;font-style:normal;">16,471</div><div class="t" style="left:1647.5px;width:100px;text-align:center;top:2.2px;font-size:16.7px;line-height:16.7px;color:#000;font-weight:normal;font-style:normal;">16,471</div><div class="t" style="left:1784.0px;width:100px;text-align:center;top:2.2px;font-size:16.7px;line-height:16.7px;color:#000;font-weight:normal;font-style:normal;">16,471</div><div class="t" style="left:107.3px;top:23.0px;font-size:16.4px;line-height:16.4px;color:#111;font-weight:normal;font-style:normal;">Biogas for Grid Injection</div><div class="t" style="left:720.5px;width:100px;text-align:center;top:23.0px;font-size:16.4px;line-height:16.4px;color:#111;font-weight:normal;font-style:normal;">Nm³/h</div><div class="t" style="left:828.2px;width:100px;text-align:center;top:23.4px;font-size:16.7px;line-height:16.7px;color:#000;font-weight:normal;font-style:normal;">31,525</div><div class="t" style="left:964.7px;width:100px;text-align:center;top:23.4px;font-size:16.7px;line-height:16.7px;color:#000;font-weight:normal;font-style:normal;">31,525</div><div class="t" style="left:1101.3px;width:100px;text-align:center;top:23.4px;font-size:16.7px;line-height:16.7px;color:#000;font-weight:normal;font-style:normal;">31,525</div><div class="t" style="left:1237.8px;width:100px;text-align:center;top:23.4px;font-size:16.7px;line-height:16.7px;color:#000;font-weight:normal;font-style:normal;">31,525</div><div class="t" style="left:1374.4px;width:100px;text-align:center;top:23.4px;font-size:16.7px;line-height:16.7px;color:#000;font-weight:normal;font-style:normal;">31,525</div><div class="t" style="left:1510.9px;width:100px;text-align:center;top:23.4px;font-size:16.7px;line-height:16.7px;color:#000;font-weight:normal;font-style:normal;">31,525</div><div class="t" style="left:1647.5px;width:100px;text-align:center;top:23.4px;font-size:16.7px;line-height:16.7px;color:#000;font-weight:normal;font-style:normal;">31,525</div><div class="t" style="left:1784.0px;width:100px;text-align:center;top:23.4px;font-size:16.7px;line-height:16.7px;color:#000;font-weight:normal;font-style:normal;">31,525</div><div class="t" style="left:107.3px;top:44.2px;font-size:16.4px;line-height:16.4px;color:#111;font-weight:normal;font-style:normal;">% of Pure Methane in Biogas</div><div class="t" style="left:720.5px;width:100px;text-align:center;top:44.2px;font-size:16.4px;line-height:16.4px;color:#111;font-weight:normal;font-style:normal;">%</div><div class="t" style="left:828.2px;width:100px;text-align:center;top:44.6px;font-size:16.7px;line-height:16.7px;color:#33763d;font-weight:normal;font-style:normal;">50.0%</div><div class="t" style="left:964.7px;width:100px;text-align:center;top:44.6px;font-size:16.7px;line-height:16.7px;color:#33763d;font-weight:normal;font-style:normal;">50.0%</div><div class="t" style="left:1101.3px;width:100px;text-align:center;top:44.6px;font-size:16.7px;line-height:16.7px;color:#33763d;font-weight:normal;font-style:normal;">50.0%</div><div class="t" style="left:1237.8px;width:100px;text-align:center;top:44.6px;font-size:16.7px;line-height:16.7px;color:#33763d;font-weight:normal;font-style:normal;">50.0%</div><div class="t" style="left:1374.4px;width:100px;text-align:center;top:44.6px;font-size:16.7px;line-height:16.7px;color:#33763d;font-weight:normal;font-style:normal;">50.0%</div><div class="t" style="left:1510.9px;width:100px;text-align:center;top:44.6px;font-size:16.7px;line-height:16.7px;color:#33763d;font-weight:normal;font-style:normal;">50.0%</div><div class="t" style="left:1647.5px;width:100px;text-align:center;top:44.6px;font-size:16.7px;line-height:16.7px;color:#33763d;font-weight:normal;font-style:normal;">50.0%</div><div class="t" style="left:1784.0px;width:100px;text-align:center;top:44.6px;font-size:16.7px;line-height:16.7px;color:#33763d;font-weight:normal;font-style:normal;">50.0%</div><div class="t" style="left:107.3px;top:65.4px;font-size:16.4px;line-height:16.4px;color:#111;font-weight:normal;font-style:normal;">% of Pure Methane in RNG Volume</div><div class="t" style="left:720.5px;width:100px;text-align:center;top:65.4px;font-size:16.4px;line-height:16.4px;color:#111;font-weight:normal;font-style:normal;">%</div><div class="t" style="left:828.2px;width:100px;text-align:center;top:65.8px;font-size:16.7px;line-height:16.7px;color:#33763d;font-weight:normal;font-style:normal;">95.7%</div><div class="t" style="left:964.7px;width:100px;text-align:center;top:65.8px;font-size:16.7px;line-height:16.7px;color:#33763d;font-weight:normal;font-style:normal;">95.7%</div><div class="t" style="left:1101.3px;width:100px;text-align:center;top:65.8px;font-size:16.7px;line-height:16.7px;color:#33763d;font-weight:normal;font-style:normal;">95.7%</div><div class="t" style="left:1237.8px;width:100px;text-align:center;top:65.8px;font-size:16.7px;line-height:16.7px;color:#33763d;font-weight:normal;font-style:normal;">95.7%</div><div class="t" style="left:1374.4px;width:100px;text-align:center;top:65.8px;font-size:16.7px;line-height:16.7px;color:#33763d;font-weight:normal;font-style:normal;">95.7%</div><div class="t" style="left:1510.9px;width:100px;text-align:center;top:65.8px;font-size:16.7px;line-height:16.7px;color:#33763d;font-weight:normal;font-style:normal;">95.7%</div><div class="t" style="left:1647.5px;width:100px;text-align:center;top:65.8px;font-size:16.7px;line-height:16.7px;color:#33763d;font-weight:normal;font-style:normal;">95.7%</div><div class="t" style="left:1784.0px;width:100px;text-align:center;top:65.8px;font-size:16.7px;line-height:16.7px;color:#33763d;font-weight:normal;font-style:normal;">95.7%</div><div class="t" style="left:99.7px;top:107.8px;font-size:16.4px;line-height:16.4px;color:#111;font-weight:normal;font-style:normal;">Biogas Sent for Grid Injection</div><div class="t" style="left:720.5px;width:100px;text-align:center;top:107.8px;font-size:16.4px;line-height:16.4px;color:#111;font-weight:normal;font-style:normal;">Nm³/h</div><div class="t" style="left:828.2px;width:100px;text-align:center;top:108.2px;font-size:16.7px;line-height:16.7px;color:#000;font-weight:normal;font-style:normal;">31,525</div><div class="t" style="left:964.7px;width:100px;text-align:center;top:108.2px;font-size:16.7px;line-height:16.7px;color:#000;font-weight:normal;font-style:normal;">31,525</div><div class="t" style="left:1101.3px;width:100px;text-align:center;top:108.2px;font-size:16.7px;line-height:16.7px;color:#000;font-weight:normal;font-style:normal;">31,525</div><div class="t" style="left:1237.8px;width:100px;text-align:center;top:108.2px;font-size:16.7px;line-height:16.7px;color:#000;font-weight:normal;font-style:normal;">31,525</div><div class="t" style="left:1374.4px;width:100px;text-align:center;top:108.2px;font-size:16.7px;line-height:16.7px;color:#000;font-weight:normal;font-style:normal;">31,525</div><div class="t" style="left:1510.9px;width:100px;text-align:center;top:108.2px;font-size:16.7px;line-height:16.7px;color:#000;font-weight:normal;font-style:normal;">31,525</div><div class="t" style="left:1647.5px;width:100px;text-align:center;top:108.2px;font-size:16.7px;line-height:16.7px;color:#000;font-weight:normal;font-style:normal;">31,525</div><div class="t" style="left:1784.0px;width:100px;text-align:center;top:108.2px;font-size:16.7px;line-height:16.7px;color:#000;font-weight:normal;font-style:normal;">31,525</div><div class="t" style="left:114.3px;top:129.0px;font-size:16.4px;line-height:16.4px;color:#111;font-weight:normal;font-style:normal;">Total Biogas Volume to Grid Injection</div><div class="t" style="left:720.5px;width:100px;text-align:center;top:129.0px;font-size:16.4px;line-height:16.4px;color:#111;font-weight:normal;font-style:normal;">Nm³/h</div><div class="t" style="left:828.2px;width:100px;text-align:center;top:129.4px;font-size:16.7px;line-height:16.7px;color:#000;font-weight:normal;font-style:normal;">31,525</div><div class="t" style="left:964.7px;width:100px;text-align:center;top:129.4px;font-size:16.7px;line-height:16.7px;color:#000;font-weight:normal;font-style:normal;">31,525</div><div class="t" style="left:1101.3px;width:100px;text-align:center;top:129.4px;font-size:16.7px;line-height:16.7px;color:#000;font-weight:normal;font-style:normal;">31,525</div><div class="t" style="left:1237.8px;width:100px;text-align:center;top:129.4px;font-size:16.7px;line-height:16.7px;color:#000;font-weight:normal;font-style:normal;">31,525</div><div class="t" style="left:1374.4px;width:100px;text-align:center;top:129.4px;font-size:16.7px;line-height:16.7px;color:#000;font-weight:normal;font-style:normal;">31,525</div><div class="t" style="left:1510.9px;width:100px;text-align:center;top:129.4px;font-size:16.7px;line-height:16.7px;color:#000;font-weight:normal;font-style:normal;">31,525</div><div class="t" style="left:1647.5px;width:100px;text-align:center;top:129.4px;font-size:16.7px;line-height:16.7px;color:#000;font-weight:normal;font-style:normal;">31,525</div><div class="t" style="left:1784.0px;width:100px;text-align:center;top:129.4px;font-size:16.7px;line-height:16.7px;color:#000;font-weight:normal;font-style:normal;">31,525</div><div class="t" style="left:114.3px;top:150.2px;font-size:16.4px;line-height:16.4px;color:#111;font-weight:normal;font-style:normal;">Start year for Grid Injection RNG Operation</div><div class="t" style="left:720.5px;width:100px;text-align:center;top:150.2px;font-size:16.4px;line-height:16.4px;color:#111;font-weight:normal;font-style:normal;">Trigger</div><div class="t" style="left:828.2px;width:100px;text-align:center;top:150.6px;font-size:16.7px;line-height:16.7px;color:#000;font-weight:normal;font-style:normal;">1</div><div class="t" style="left:964.7px;width:100px;text-align:center;top:150.6px;font-size:16.7px;line-height:16.7px;color:#000;font-weight:normal;font-style:normal;">1</div><div class="t" style="left:1101.3px;width:100px;text-align:center;top:150.6px;font-size:16.7px;line-height:16.7px;color:#000;font-weight:normal;font-style:normal;">1</div><div class="t" style="left:1237.8px;width:100px;text-align:center;top:150.6px;font-size:16.7px;line-height:16.7px;color:#000;font-weight:normal;font-style:normal;">1</div><div class="t" style="left:1374.4px;width:100px;text-align:center;top:150.6px;font-size:16.7px;line-height:16.7px;color:#000;font-weight:normal;font-style:normal;">1</div><div class="t" style="left:1510.9px;width:100px;text-align:center;top:150.6px;font-size:16.7px;line-height:16.7px;color:#000;font-weight:normal;font-style:normal;">1</div><div class="t" style="left:1647.5px;width:100px;text-align:center;top:150.6px;font-size:16.7px;line-height:16.7px;color:#000;font-weight:normal;font-style:normal;">1</div><div class="t" style="left:1784.0px;width:100px;text-align:center;top:150.6px;font-size:16.7px;line-height:16.7px;color:#000;font-weight:bold;font-style:normal;">1</div><div class="t" style="left:99.7px;top:235.0px;font-size:16.4px;line-height:16.4px;color:#111;font-weight:normal;font-style:normal;">Start year for Compressed RNG Operation</div><div class="t" style="left:720.5px;width:100px;text-align:center;top:235.0px;font-size:16.4px;line-height:16.4px;color:#111;font-weight:normal;font-style:normal;">Trigger</div><div class="t" style="left:828.2px;width:100px;text-align:center;top:235.4px;font-size:16.7px;line-height:16.7px;color:#000;font-weight:normal;font-style:normal;">1</div><div class="t" style="left:964.7px;width:100px;text-align:center;top:235.4px;font-size:16.7px;line-height:16.7px;color:#000;font-weight:normal;font-style:normal;">1</div><div class="t" style="left:1101.3px;width:100px;text-align:center;top:235.4px;font-size:16.7px;line-height:16.7px;color:#000;font-weight:normal;font-style:normal;">1</div><div class="t" style="left:1237.8px;width:100px;text-align:center;top:235.4px;font-size:16.7px;line-height:16.7px;color:#000;font-weight:normal;font-style:normal;">1</div><div class="t" style="left:1374.4px;width:100px;text-align:center;top:235.4px;font-size:16.7px;line-height:16.7px;color:#000;font-weight:normal;font-style:normal;">1</div><div class="t" style="left:1510.9px;width:100px;text-align:center;top:235.4px;font-size:16.7px;line-height:16.7px;color:#000;font-weight:normal;font-style:normal;">1</div><div class="t" style="left:1647.5px;width:100px;text-align:center;top:235.4px;font-size:16.7px;line-height:16.7px;color:#000;font-weight:normal;font-style:normal;">1</div><div class="t" style="left:1784.0px;width:100px;text-align:center;top:235.4px;font-size:16.7px;line-height:16.7px;color:#000;font-weight:bold;font-style:normal;">1</div><div class="t" style="left:99.7px;top:277.4px;font-size:16.4px;line-height:16.4px;color:#111;font-weight:normal;font-style:normal;">Net RNG Compressed</div><div class="t" style="left:720.5px;width:100px;text-align:center;top:277.4px;font-size:16.4px;line-height:16.4px;color:#111;font-weight:normal;font-style:normal;">Nm³</div><div class="t" style="left:861.1px;width:40px;text-align:center;top:278.0px;font-size:16.4px;line-height:16.4px;color:#111;font-weight:normal;font-style:normal;">-</div><div class="t" style="left:997.6px;width:40px;text-align:center;top:278.0px;font-size:16.4px;line-height:16.4px;color:#111;font-weight:normal;font-style:normal;">-</div><div class="t" style="left:1134.2px;width:40px;text-align:center;top:278.0px;font-size:16.4px;line-height:16.4px;color:#111;font-weight:normal;font-style:normal;">-</div><div class="t" style="left:1270.7px;width:40px;text-align:center;top:278.0px;font-size:16.4px;line-height:16.4px;color:#111;font-weight:normal;font-style:normal;">-</div><div class="t" style="left:1407.3px;width:40px;text-align:center;top:278.0px;font-size:16.4px;line-height:16.4px;color:#111;font-weight:normal;font-style:normal;">-</div><div class="t" style="left:1543.8px;width:40px;text-align:center;top:278.0px;font-size:16.4px;line-height:16.4px;color:#111;font-weight:normal;font-style:normal;">-</div><div class="t" style="left:1680.4px;width:40px;text-align:center;top:278.0px;font-size:16.4px;line-height:16.4px;color:#111;font-weight:normal;font-style:normal;">-</div><div class="t" style="left:1816.9px;width:40px;text-align:center;top:278.0px;font-size:16.4px;line-height:16.4px;color:#111;font-weight:normal;font-style:normal;">-</div><div class="t" style="left:107.3px;top:298.6px;font-size:16.4px;line-height:16.4px;color:#111;font-weight:normal;font-style:normal;">Total RNG for Compression</div><div class="t" style="left:720.5px;width:100px;text-align:center;top:298.6px;font-size:16.4px;line-height:16.4px;color:#111;font-weight:normal;font-style:normal;">Nm³/h</div><div class="t" style="left:861.1px;width:40px;text-align:center;top:299.2px;font-size:16.4px;line-height:16.4px;color:#111;font-weight:normal;font-style:normal;">-</div><div class="t" style="left:997.6px;width:40px;text-align:center;top:299.2px;font-size:16.4px;line-height:16.4px;color:#111;font-weight:normal;font-style:normal;">-</div><div class="t" style="left:1134.2px;width:40px;text-align:center;top:299.2px;font-size:16.4px;line-height:16.4px;color:#111;font-weight:normal;font-style:normal;">-</div><div class="t" style="left:1270.7px;width:40px;text-align:center;top:299.2px;font-size:16.4px;line-height:16.4px;color:#111;font-weight:normal;font-style:normal;">-</div><div class="t" style="left:1407.3px;width:40px;text-align:center;top:299.2px;font-size:16.4px;line-height:16.4px;color:#111;font-weight:normal;font-style:normal;">-</div><div class="t" style="left:1543.8px;width:40px;text-align:center;top:299.2px;font-size:16.4px;line-height:16.4px;color:#111;font-weight:normal;font-style:normal;">-</div><div class="t" style="left:1680.4px;width:40px;text-align:center;top:299.2px;font-size:16.4px;line-height:16.4px;color:#111;font-weight:normal;font-style:normal;">-</div><div class="t" style="left:1816.9px;width:40px;text-align:center;top:299.2px;font-size:16.4px;line-height:16.4px;color:#111;font-weight:normal;font-style:normal;">-</div><div class="t" style="left:107.3px;top:319.8px;font-size:16.4px;line-height:16.4px;color:#111;font-weight:normal;font-style:normal;">Losses and PCS Conversion (Compression)</div><div class="t" style="left:720.5px;width:100px;text-align:center;top:319.8px;font-size:16.4px;line-height:16.4px;color:#111;font-weight:normal;font-style:normal;">%</div><div class="t" style="left:861.1px;width:40px;text-align:center;top:320.4px;font-size:16.4px;line-height:16.4px;color:#111;font-weight:normal;font-style:normal;">-</div><div class="t" style="left:997.6px;width:40px;text-align:center;top:320.4px;font-size:16.4px;line-height:16.4px;color:#111;font-weight:normal;font-style:normal;">-</div><div class="t" style="left:1134.2px;width:40px;text-align:center;top:320.4px;font-size:16.4px;line-height:16.4px;color:#111;font-weight:normal;font-style:normal;">-</div><div class="t" style="left:1270.7px;width:40px;text-align:center;top:320.4px;font-size:16.4px;line-height:16.4px;color:#111;font-weight:normal;font-style:normal;">-</div><div class="t" style="left:1407.3px;width:40px;text-align:center;top:320.4px;font-size:16.4px;line-height:16.4px;color:#111;font-weight:normal;font-style:normal;">-</div><div class="t" style="left:1543.8px;width:40px;text-align:center;top:320.4px;font-size:16.4px;line-height:16.4px;color:#111;font-weight:normal;font-style:normal;">-</div><div class="t" style="left:1680.4px;width:40px;text-align:center;top:320.4px;font-size:16.4px;line-height:16.4px;color:#111;font-weight:normal;font-style:normal;">-</div><div class="t" style="left:1816.9px;width:40px;text-align:center;top:320.4px;font-size:16.4px;line-height:16.4px;color:#111;font-weight:normal;font-style:normal;">-</div><div class="t" style="left:107.3px;top:341.0px;font-size:16.4px;line-height:16.4px;color:#111;font-weight:normal;font-style:normal;">Capacity Factor (Compression)</div><div class="t" style="left:720.5px;width:100px;text-align:center;top:341.0px;font-size:16.4px;line-height:16.4px;color:#111;font-weight:normal;font-style:normal;">%</div><div class="t" style="left:861.1px;width:40px;text-align:center;top:341.6px;font-size:16.4px;line-height:16.4px;color:#111;font-weight:normal;font-style:normal;">-</div><div class="t" style="left:997.6px;width:40px;text-align:center;top:341.6px;font-size:16.4px;line-height:16.4px;color:#111;font-weight:normal;font-style:normal;">-</div><div class="t" style="left:1134.2px;width:40px;text-align:center;top:341.6px;font-size:16.4px;line-height:16.4px;color:#111;font-weight:normal;font-style:normal;">-</div><div class="t" style="left:1270.7px;width:40px;text-align:center;top:341.6px;font-size:16.4px;line-height:16.4px;color:#111;font-weight:normal;font-style:normal;">-</div><div class="t" style="left:1407.3px;width:40px;text-align:center;top:341.6px;font-size:16.4px;line-height:16.4px;color:#111;font-weight:normal;font-style:normal;">-</div><div class="t" style="left:1543.8px;width:40px;text-align:center;top:341.6px;font-size:16.4px;line-height:16.4px;color:#111;font-weight:normal;font-style:normal;">-</div><div class="t" style="left:1680.4px;width:40px;text-align:center;top:341.6px;font-size:16.4px;line-height:16.4px;color:#111;font-weight:normal;font-style:normal;">-</div><div class="t" style="left:1816.9px;width:40px;text-align:center;top:341.6px;font-size:16.4px;line-height:16.4px;color:#111;font-weight:normal;font-style:normal;">-</div><div class="t" style="left:107.3px;top:362.2px;font-size:16.4px;line-height:16.4px;color:#111;font-weight:normal;font-style:normal;">Hours in Year</div><div class="t" style="left:720.5px;width:100px;text-align:center;top:362.2px;font-size:16.4px;line-height:16.4px;color:#111;font-weight:normal;font-style:normal;">Hours</div><div class="t" style="left:828.2px;width:100px;text-align:center;top:362.6px;font-size:16.7px;line-height:16.7px;color:#000;font-weight:normal;font-style:normal;">8,760</div><div class="t" style="left:964.7px;width:100px;text-align:center;top:362.6px;font-size:16.7px;line-height:16.7px;color:#000;font-weight:normal;font-style:normal;">8,760</div><div class="t" style="left:1101.3px;width:100px;text-align:center;top:362.6px;font-size:16.7px;line-height:16.7px;color:#000;font-weight:normal;font-style:normal;">8,760</div><div class="t" style="left:1237.8px;width:100px;text-align:center;top:362.6px;font-size:16.7px;line-height:16.7px;color:#000;font-weight:normal;font-style:normal;">8,760</div><div class="t" style="left:1374.4px;width:100px;text-align:center;top:362.6px;font-size:16.7px;line-height:16.7px;color:#000;font-weight:normal;font-style:normal;">8,760</div><div class="t" style="left:1510.9px;width:100px;text-align:center;top:362.6px;font-size:16.7px;line-height:16.7px;color:#000;font-weight:normal;font-style:normal;">8,760</div><div class="t" style="left:1647.5px;width:100px;text-align:center;top:362.6px;font-size:16.7px;line-height:16.7px;color:#000;font-weight:normal;font-style:normal;">8,760</div><div class="t" style="left:1784.0px;width:100px;text-align:center;top:362.6px;font-size:16.7px;line-height:16.7px;color:#000;font-weight:normal;font-style:normal;">8,760</div><div class="t" style="left:99.7px;top:404.6px;font-size:16.4px;line-height:16.4px;color:#111;font-weight:normal;font-style:normal;">Total RNG for Compression</div><div class="t" style="left:720.5px;width:100px;text-align:center;top:404.6px;font-size:16.4px;line-height:16.4px;color:#111;font-weight:normal;font-style:normal;">Nm³/h</div><div class="t" style="left:861.1px;width:40px;text-align:center;top:405.2px;font-size:16.4px;line-height:16.4px;color:#111;font-weight:normal;font-style:normal;">-</div><div class="t" style="left:997.6px;width:40px;text-align:center;top:405.2px;font-size:16.4px;line-height:16.4px;color:#111;font-weight:normal;font-style:normal;">-</div><div class="t" style="left:1134.2px;width:40px;text-align:center;top:405.2px;font-size:16.4px;line-height:16.4px;color:#111;font-weight:normal;font-style:normal;">-</div><div class="t" style="left:1270.7px;width:40px;text-align:center;top:405.2px;font-size:16.4px;line-height:16.4px;color:#111;font-weight:normal;font-style:normal;">-</div><div class="t" style="left:1407.3px;width:40px;text-align:center;top:405.2px;font-size:16.4px;line-height:16.4px;color:#111;font-weight:normal;font-style:normal;">-</div><div class="t" style="left:1543.8px;width:40px;text-align:center;top:405.2px;font-size:16.4px;line-height:16.4px;color:#111;font-weight:normal;font-style:normal;">-</div><div class="t" style="left:1680.4px;width:40px;text-align:center;top:405.2px;font-size:16.4px;line-height:16.4px;color:#111;font-weight:normal;font-style:normal;">-</div><div class="t" style="left:1816.9px;width:40px;text-align:center;top:405.2px;font-size:16.4px;line-height:16.4px;color:#111;font-weight:normal;font-style:normal;">-</div><div class="t" style="left:114.3px;top:425.8px;font-size:16.4px;line-height:16.4px;color:#111;font-weight:normal;font-style:normal;">Effective Biogas Sent for RNG Compression</div><div class="t" style="left:720.5px;width:100px;text-align:center;top:425.8px;font-size:16.4px;line-height:16.4px;color:#111;font-weight:normal;font-style:normal;">Nm³/h</div><div class="t" style="left:861.1px;width:40px;text-align:center;top:426.4px;font-size:16.4px;line-height:16.4px;color:#111;font-weight:normal;font-style:normal;">-</div><div class="t" style="left:997.6px;width:40px;text-align:center;top:426.4px;font-size:16.4px;line-height:16.4px;color:#111;font-weight:normal;font-style:normal;">-</div><div class="t" style="left:1134.2px;width:40px;text-align:center;top:426.4px;font-size:16.4px;line-height:16.4px;color:#111;font-weight:normal;font-style:normal;">-</div><div class="t" style="left:1270.7px;width:40px;text-align:center;top:426.4px;font-size:16.4px;line-height:16.4px;color:#111;font-weight:normal;font-style:normal;">-</div><div class="t" style="left:1407.3px;width:40px;text-align:center;top:426.4px;font-size:16.4px;line-height:16.4px;color:#111;font-weight:normal;font-style:normal;">-</div><div class="t" style="left:1543.8px;width:40px;text-align:center;top:426.4px;font-size:16.4px;line-height:16.4px;color:#111;font-weight:normal;font-style:normal;">-</div><div class="t" style="left:1680.4px;width:40px;text-align:center;top:426.4px;font-size:16.4px;line-height:16.4px;color:#111;font-weight:normal;font-style:normal;">-</div><div class="t" style="left:1816.9px;width:40px;text-align:center;top:426.4px;font-size:16.4px;line-height:16.4px;color:#111;font-weight:normal;font-style:normal;">-</div><div class="t" style="left:114.3px;top:447.0px;font-size:16.4px;line-height:16.4px;color:#111;font-weight:normal;font-style:normal;">% of RNG in Biogas</div><div class="t" style="left:720.5px;width:100px;text-align:center;top:447.0px;font-size:16.4px;line-height:16.4px;color:#111;font-weight:normal;font-style:normal;">%</div><div class="t" style="left:828.2px;width:100px;text-align:center;top:447.4px;font-size:16.7px;line-height:16.7px;color:#000;font-weight:normal;font-style:normal;">50.0%</div><div class="t" style="left:964.7px;width:100px;text-align:center;top:447.4px;font-size:16.7px;line-height:16.7px;color:#000;font-weight:normal;font-style:normal;">50.0%</div><div class="t" style="left:1101.3px;width:100px;text-align:center;top:447.4px;font-size:16.7px;line-height:16.7px;color:#000;font-weight:normal;font-style:normal;">50.0%</div><div class="t" style="left:1237.8px;width:100px;text-align:center;top:447.4px;font-size:16.7px;line-height:16.7px;color:#000;font-weight:normal;font-style:normal;">50.0%</div><div class="t" style="left:1374.4px;width:100px;text-align:center;top:447.4px;font-size:16.7px;line-height:16.7px;color:#000;font-weight:normal;font-style:normal;">50.0%</div><div class="t" style="left:1510.9px;width:100px;text-align:center;top:447.4px;font-size:16.7px;line-height:16.7px;color:#000;font-weight:normal;font-style:normal;">50.0%</div><div class="t" style="left:1647.5px;width:100px;text-align:center;top:447.4px;font-size:16.7px;line-height:16.7px;color:#000;font-weight:normal;font-style:normal;">50.0%</div><div class="t" style="left:1784.0px;width:100px;text-align:center;top:447.4px;font-size:16.7px;line-height:16.7px;color:#000;font-weight:normal;font-style:normal;">50.0%</div><div class="t" style="left:114.3px;top:468.2px;font-size:16.4px;line-height:16.4px;color:#111;font-weight:normal;font-style:normal;">% of methane in RNG</div><div class="t" style="left:720.5px;width:100px;text-align:center;top:468.2px;font-size:16.4px;line-height:16.4px;color:#111;font-weight:normal;font-style:normal;">%</div><div class="t" style="left:828.2px;width:100px;text-align:center;top:468.6px;font-size:16.7px;line-height:16.7px;color:#000;font-weight:normal;font-style:normal;">95.7%</div><div class="t" style="left:964.7px;width:100px;text-align:center;top:468.6px;font-size:16.7px;line-height:16.7px;color:#000;font-weight:normal;font-style:normal;">95.7%</div><div class="t" style="left:1101.3px;width:100px;text-align:center;top:468.6px;font-size:16.7px;line-height:16.7px;color:#000;font-weight:normal;font-style:normal;">95.7%</div><div class="t" style="left:1237.8px;width:100px;text-align:center;top:468.6px;font-size:16.7px;line-height:16.7px;color:#000;font-weight:normal;font-style:normal;">95.7%</div><div class="t" style="left:1374.4px;width:100px;text-align:center;top:468.6px;font-size:16.7px;line-height:16.7px;color:#000;font-weight:normal;font-style:normal;">95.7%</div><div class="t" style="left:1510.9px;width:100px;text-align:center;top:468.6px;font-size:16.7px;line-height:16.7px;color:#000;font-weight:normal;font-style:normal;">95.7%</div><div class="t" style="left:1647.5px;width:100px;text-align:center;top:468.6px;font-size:16.7px;line-height:16.7px;color:#000;font-weight:normal;font-style:normal;">95.7%</div><div class="t" style="left:1784.0px;width:100px;text-align:center;top:468.6px;font-size:16.7px;line-height:16.7px;color:#000;font-weight:normal;font-style:normal;">95.7%</div><div class="t" style="left:99.7px;top:510.6px;font-size:16.4px;line-height:16.4px;color:#111;font-weight:normal;font-style:normal;">Biogas Sent for RNG Compression</div><div class="t" style="left:720.5px;width:100px;text-align:center;top:510.6px;font-size:16.4px;line-height:16.4px;color:#111;font-weight:normal;font-style:normal;">Nm³/h</div><div class="t" style="left:861.1px;width:40px;text-align:center;top:511.2px;font-size:16.4px;line-height:16.4px;color:#111;font-weight:normal;font-style:normal;">-</div><div class="t" style="left:997.6px;width:40px;text-align:center;top:511.2px;font-size:16.4px;line-height:16.4px;color:#111;font-weight:normal;font-style:normal;">-</div><div class="t" style="left:1134.2px;width:40px;text-align:center;top:511.2px;font-size:16.4px;line-height:16.4px;color:#111;font-weight:normal;font-style:normal;">-</div><div class="t" style="left:1270.7px;width:40px;text-align:center;top:511.2px;font-size:16.4px;line-height:16.4px;color:#111;font-weight:normal;font-style:normal;">-</div><div class="t" style="left:1407.3px;width:40px;text-align:center;top:511.2px;font-size:16.4px;line-height:16.4px;color:#111;font-weight:normal;font-style:normal;">-</div><div class="t" style="left:1543.8px;width:40px;text-align:center;top:511.2px;font-size:16.4px;line-height:16.4px;color:#111;font-weight:normal;font-style:normal;">-</div><div class="t" style="left:1680.4px;width:40px;text-align:center;top:511.2px;font-size:16.4px;line-height:16.4px;color:#111;font-weight:normal;font-style:normal;">-</div><div class="t" style="left:1816.9px;width:40px;text-align:center;top:511.2px;font-size:16.4px;line-height:16.4px;color:#111;font-weight:normal;font-style:normal;">-</div><div class="t" style="left:114.3px;top:529.9px;font-size:16.4px;line-height:16.4px;color:#111;font-weight:normal;font-style:normal;">Total Biogas Volume to Compression</div><div class="t" style="left:720.5px;width:100px;text-align:center;top:529.9px;font-size:16.4px;line-height:16.4px;color:#111;font-weight:normal;font-style:normal;">Nm³/h</div><div class="t" style="left:861.1px;width:40px;text-align:center;top:530.5px;font-size:16.4px;line-height:16.4px;color:#111;font-weight:normal;font-style:normal;">-</div><div class="t" style="left:997.6px;width:40px;text-align:center;top:530.5px;font-size:16.4px;line-height:16.4px;color:#111;font-weight:normal;font-style:normal;">-</div><div class="t" style="left:1134.2px;width:40px;text-align:center;top:530.5px;font-size:16.4px;line-height:16.4px;color:#111;font-weight:normal;font-style:normal;">-</div><div class="t" style="left:1270.7px;width:40px;text-align:center;top:530.5px;font-size:16.4px;line-height:16.4px;color:#111;font-weight:normal;font-style:normal;">-</div><div class="t" style="left:1407.3px;width:40px;text-align:center;top:530.5px;font-size:16.4px;line-height:16.4px;color:#111;font-weight:normal;font-style:normal;">-</div><div class="t" style="left:1543.8px;width:40px;text-align:center;top:530.5px;font-size:16.4px;line-height:16.4px;color:#111;font-weight:normal;font-style:normal;">-</div><div class="t" style="left:1680.4px;width:40px;text-align:center;top:530.5px;font-size:16.4px;line-height:16.4px;color:#111;font-weight:normal;font-style:normal;">-</div><div class="t" style="left:1816.9px;width:40px;text-align:center;top:530.5px;font-size:16.4px;line-height:16.4px;color:#111;font-weight:normal;font-style:normal;">-</div><div class="t" style="left:73.5px;width:20px;text-align:center;top:194.3px;font-size:15px;line-height:15px;color:#222;font-weight:normal;font-style:normal;">x</div><div class="t" style="left:99.5px;top:192.1px;font-size:17px;line-height:17px;color:#111;font-weight:bold;font-style:normal;">Compression</div><div class="r" style="left:95px;top:211px;width:1810px;height:0;border-top:1.3px dotted #555"></div><svg class="r" style="left:697px;top:0px" width="9" height="8"><path d="M1 0 H8 V7 Z" fill="#c00000"/></svg><div class="r" style="left:1767.2px;top:167.70000000000005px;width:138.6px;height:23.3px;border:2px solid #1e6b45;box-sizing:border-box"></div><div class="r" style="left:1902px;top:187.5px;width:6px;height:6px;background:#1e6b45;border:1px solid #fff;box-sizing:border-box"></div></div><div class="r" style="left:1929px;top:285px;width:77px;height:726px;background:#e3e9ec;"></div><div class="r" style="left:2006px;top:280px;width:26px;height:731px;background:#f1f2f2;"></div><div class="r" style="left:1929px;top:473px;width:77px;height:1.2px;background:#b0b0b0;"></div><svg class="r" style="left:2011px;top:289px" width="16" height="12" viewBox="0 0 16 12"><path d="M8 2 L14 10 H2 Z" fill="#606060"/></svg><div class="r" style="left:2013px;top:359px;width:12px;height:22px;background:#6a6a6a;border-radius:6px;"></div><svg class="r" style="left:2011px;top:993px" width="16" height="12" viewBox="0 0 16 12"><path d="M8 10 L14 2 H2 Z" fill="#606060"/></svg><div class="r" style="left:0px;top:1009.5px;width:1245px;height:41px;background:linear-gradient(90deg,#ebe5df 0%,#ede7de 50%,#eee9e0 100%);"></div><div class="r" style="left:1245px;top:1009.5px;width:787px;height:41px;background:linear-gradient(90deg,#eeebe3 0%,#efefec 30%,#f0f0f0 100%);"></div><div class="r" style="left:1268px;top:1018px;width:744px;height:24px;background:#f2f2f1;border-radius:11px;"></div><svg class="r" style="left:30px;top:1021px" width="14" height="18" viewBox="0 0 14 18"><path d="M10 2 L3.5 9 L10 16" fill="none" stroke="#9a9a9a" stroke-width="1.5"/></svg><svg class="r" style="left:73px;top:1021px" width="14" height="18" viewBox="0 0 14 18"><path d="M4 2 L10.5 9 L4 16" fill="none" stroke="#9a9a9a" stroke-width="1.5"/></svg><div class="t" style="left:162.5px;top:1022.3px;font-size:18px;line-height:18px;color:#262626;font-weight:normal;font-style:normal;">Control Panel</div><div class="r" style="left:290px;top:1017px;width:1px;height:30px;background:#d9d3cc;"></div><div class="t" style="left:308.0px;top:1022.0px;font-size:18.3px;line-height:18.3px;color:#262626;font-weight:normal;font-style:normal;">Macro</div><div class="r" style="left:376px;top:1017px;width:1px;height:30px;background:#d9d3cc;"></div><div class="r" style="left:383.5px;top:1014px;width:74.5px;height:30.5px;background:linear-gradient(180deg,#f3f6f8 0%,#dde7ee 45%,#b9ccd9 100%);border-radius:5px;box-shadow:0 1px 1px rgba(0,0,0,0.15);"></div><div class="t" style="left:392.5px;top:1018.2px;font-size:17.3px;line-height:17.3px;color:#1c2a36;font-weight:normal;font-style:normal;-webkit-text-stroke:0.5px #1c2a36;">Asset 1</div><div class="r" style="left:391.5px;top:1040px;width:59px;height:2.8px;background:#1d6e5c;border-radius:1px;"></div><div class="r" style="left:465px;top:1017px;width:1px;height:30px;background:#d9d3cc;"></div><div class="t" style="left:482.0px;top:1022.9px;font-size:17.2px;line-height:17.2px;color:#262626;font-weight:normal;font-style:normal;">Sheet1</div><div class="r" style="left:554px;top:1017px;width:1px;height:30px;background:#d9d3cc;"></div><svg class="r" style="left:607px;top:1020px" width="19" height="19" viewBox="0 0 19 19"><path d="M9.5 2 V17 M2 9.5 H17" stroke="#333" stroke-width="1.6"/></svg><div class="r" style="left:1221.5px;top:1024px;width:3px;height:3px;background:#222;"></div><div class="r" style="left:1221.5px;top:1029.5px;width:3px;height:3px;background:#222;"></div><div class="r" style="left:1221.5px;top:1035px;width:3px;height:3px;background:#222;"></div><svg class="r" style="left:1249px;top:1022px" width="14" height="16" viewBox="0 0 14 16"><path d="M3 8 L12 2 V14 Z" fill="#606060"/></svg><div class="r" style="left:1820px;top:1024px;width:164px;height:11.5px;background:#666;border-radius:6px;"></div><svg class="r" style="left:1988px;top:1022px" width="14" height="16" viewBox="0 0 14 16"><path d="M11 8 L2 2 V14 Z" fill="#606060"/></svg><div class="r" style="left:0px;top:1050.5px;width:2032px;height:30px;background:#f3f3f3;"></div><div class="t" style="left:14.5px;top:1061.0px;font-size:13px;line-height:13px;color:#333;font-weight:normal;font-style:normal;">Ready</div><div class="t" style="left:75.5px;top:1061.1px;font-size:12.9px;line-height:12.9px;color:#333;font-weight:normal;font-style:normal;">Calculate</div><svg class="r" style="left:155px;top:1056px" width="24" height="22" viewBox="0 0 24 22"><path d="M17.5 8.5 V2.8 C17.5 2.3 17.2 2 16.7 2 H3 C2.5 2 2.2 2.3 2.2 2.8 V17.3 C2.2 17.8 2.5 18.1 3 18.1 H8.5 M2.2 5.3 H17.5" fill="none" stroke="#333" stroke-width="1.4"/><path d="M5.2 8.3 H8.1 M5.2 11 H8.1 M5.2 13.7 H8.1" stroke="#444" stroke-width="1.2"/><circle cx="15.3" cy="13.4" r="5.1" fill="#f3f3f3" stroke="#2a2a2a" stroke-width="1.5"/><circle cx="15.3" cy="13.4" r="2.3" fill="#111"/></svg><svg class="r" style="left:198px;top:1056px" width="24" height="22" viewBox="0 0 24 22"><circle cx="9.7" cy="3.6" r="1.9" fill="none" stroke="#2a2a2a" stroke-width="1.3"/><path d="M2.5 5.8 C5 6.8 7 7.2 9.7 7.2 C12.5 7.2 15 6.5 17.8 5.1 M9.7 7.2 V11.5 L5.5 18.1 M9.7 11.5 L11 13" fill="none" stroke="#2a2a2a" stroke-width="1.5" stroke-linecap="round"/><path d="M12.9 8.8 L20.2 19.1 M19.8 11.2 L11.4 19.6" stroke="#333" stroke-width="1.1"/></svg><div class="t" style="left:223.5px;top:1060.7px;font-size:13.4px;line-height:13.4px;color:#1e1e1e;font-weight:bold;font-style:normal;">Accessibility: Investigate</div><div class="r" style="left:1639px;top:1053px;width:50px;height:27px;background:#e3e3e3;"></div><svg class="r" style="left:1653px;top:1056px" width="20" height="20" viewBox="0 0 20 20"><rect x="1.5" y="1.5" width="17" height="17" fill="none" stroke="#444" stroke-width="1.6"/><path d="M7.2 1.5 V18.5 M12.8 1.5 V18.5 M1.5 7.2 H18.5 M1.5 12.8 H18.5" stroke="#444" stroke-width="1.6"/></svg><svg class="r" style="left:1706px;top:1056px" width="21" height="20" viewBox="0 0 21 20"><rect x="1.5" y="1.5" width="18" height="17" fill="none" stroke="#444" stroke-width="1.5"/><rect x="6" y="5" width="9" height="10" fill="none" stroke="#444" stroke-width="1.3"/><path d="M8 8 H13 M8 10.5 H13 M8 13 H13" stroke="#444" stroke-width="1"/></svg><svg class="r" style="left:1759px;top:1056px" width="21" height="20" viewBox="0 0 21 20"><rect x="1.5" y="1.5" width="18" height="17" fill="none" stroke="#444" stroke-width="1.5"/><path d="M1.5 12 H10 V1.5 M10 6 H13.5 V1.5" fill="none" stroke="#444" stroke-width="1.4"/></svg><div class="r" style="left:1803.5px;top:1065.5px;width:11px;height:1.4px;background:#444;"></div><div class="r" style="left:1821px;top:1066px;width:132px;height:1px;background:#777;"></div><div class="r" style="left:1870.5px;top:1059px;width:6px;height:14.5px;background:#555;border-radius:1px;"></div><div class="r" style="left:1886.5px;top:1062px;width:1px;height:8px;background:#666;"></div><svg class="r" style="left:1957px;top:1059px" width="14" height="14" viewBox="0 0 14 14"><path d="M7 1 V13 M1 7 H13" stroke="#444" stroke-width="1.3"/></svg><div class="t" style="left:1987.0px;top:1061.3px;font-size:12.6px;line-height:12.6px;color:#333;font-weight:normal;font-style:normal;">80%</div>
</body></html>
